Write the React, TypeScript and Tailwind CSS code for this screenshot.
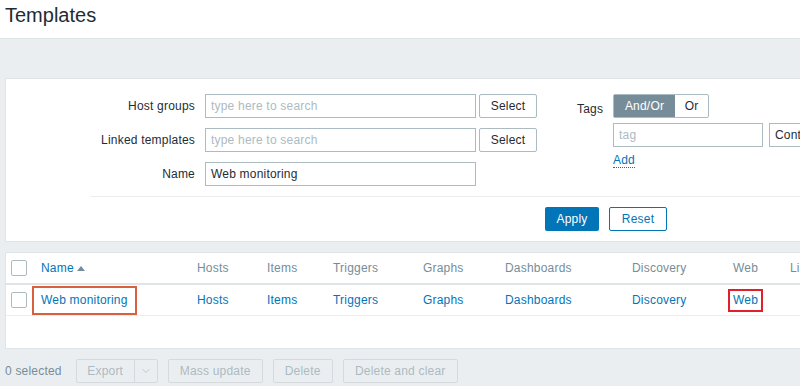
import { ChevronDown } from "lucide-react";

const COLS = [
  { label: "Hosts", w: "w-[70px]" },
  { label: "Items", w: "w-[66px]" },
  { label: "Triggers", w: "w-[90px]" },
  { label: "Graphs", w: "w-[82px]" },
  { label: "Dashboards", w: "w-[127px]" },
  { label: "Discovery", w: "w-[101px]" },
];

export default function App() {
  return (
    <div className="h-[386px] w-[800px] overflow-hidden bg-[#ebeef0] font-['Liberation_Sans',Arial,sans-serif] text-[12px] tracking-[0.2px] text-[#1f2c33]">
      <header className="h-[39px] border-b border-[#dfe4e7] bg-white px-[5px] pt-[3px]">
        <h1 className="text-[20px] leading-[24px] tracking-normal">Templates</h1>
      </header>

      <div className="h-[39px]" />

      <FilterPanel />

      <div className="h-[10px]" />

      <TemplateTable />

      <div className="flex items-center gap-[10px] px-[5px] pt-[10px]">
        <span className="mr-[4px] text-[#768d99]">0 selected</span>
        <div className="flex h-[24px] rounded-[2px] border border-[#d4dadd] text-[#acbbc2]">
          <span className="flex w-[58px] items-center justify-center border-r border-[#d4dadd]">Export</span>
          <span className="flex w-[22px] items-center justify-center">
            <ChevronDown className="h-[12px] w-[12px]" strokeWidth={1.5} />
          </span>
        </div>
        <DisabledButton className="w-[95px]">Mass update</DisabledButton>
        <DisabledButton className="w-[60px]">Delete</DisabledButton>
        <DisabledButton className="w-[115px]">Delete and clear</DisabledButton>
      </div>
    </div>
  );
}

function DisabledButton({ children, className }: { children: React.ReactNode; className: string }) {
  return (
    <span className={`flex h-[24px] items-center justify-center rounded-[2px] border border-[#d4dadd] text-[#acbbc2] ${className}`}>
      {children}
    </span>
  );
}

function FilterPanel() {
  return (
    <section className="ml-[5px] w-[1000px] border border-[#dfe4e7] bg-white pt-[15px] pb-[10px]">
      <div className="flex">
        <div className="flex w-[571px] flex-col gap-[10px]">
          <FormRow label="Host groups">
            <TextInput placeholder="type here to search" />
            <SelectButton />
          </FormRow>
          <FormRow label="Linked templates">
            <TextInput placeholder="type here to search" />
            <SelectButton />
          </FormRow>
          <FormRow label="Name">
            <TextInput value="Web monitoring" />
          </FormRow>
        </div>

        <div className="flex gap-[10px]">
          <span className="mt-[6px] w-[26px]">Tags</span>
          <div className="flex flex-col">
            <div className="flex h-[24px] w-[96px] rounded-[2px] border border-[#acbbc2]">
              <span className="flex w-[61px] items-center justify-center bg-[#768d99] text-white">And/Or</span>
              <span className="flex flex-1 items-center justify-center">Or</span>
            </div>
            <div className="mt-[5px] flex gap-[6px]">
              <span className="flex h-[24px] w-[150px] items-center border border-[#acbbc2] px-[5px] text-[#acbbc2]">
                tag
              </span>
              <span className="flex h-[24px] w-[120px] items-center border border-[#acbbc2] px-[5px]">Contains</span>
            </div>
            <span className="mt-[6px] w-fit border-b border-dotted border-[#0275b8] leading-[14px] text-[#0275b8]">
              Add
            </span>
          </div>
        </div>
      </div>

      <div className="mt-[10px] ml-[84px] border-t border-[#ebeef0] pt-[10px]">
        <div className="ml-[455px] flex gap-[10px]">
          <span className="flex h-[24px] w-[54px] items-center justify-center rounded-[2px] bg-[#0275b8] text-white">
            Apply
          </span>
          <span className="flex h-[24px] w-[58px] items-center justify-center rounded-[2px] border border-[#0275b8] text-[#0275b8]">
            Reset
          </span>
        </div>
      </div>
    </section>
  );
}

function FormRow({ label, children }: { label: string; children: React.ReactNode }) {
  return (
    <div className="flex items-center">
      <span className="w-[199px] pr-[10px] text-right">{label}</span>
      <div className="flex gap-[3px]">{children}</div>
    </div>
  );
}

function TextInput({ placeholder, value }: { placeholder?: string; value?: string }) {
  return (
    <span
      className={`flex h-[24px] w-[271px] items-center border border-[#acbbc2] px-[5px] ${
        value ? "text-[#1f2c33]" : "text-[#acbbc2]"
      }`}
    >
      {value ?? placeholder}
    </span>
  );
}

function SelectButton() {
  return (
    <span className="flex h-[24px] w-[58px] items-center justify-center rounded-[2px] border border-[#acbbc2]">
      Select
    </span>
  );
}

function Checkbox() {
  return <span className="block h-[16px] w-[16px] rounded-[2px] border border-[#acbbc2] bg-white" />;
}

function TemplateTable() {
  return (
    <section className="ml-[5px] h-[97px] w-[1000px] border border-[#dfe4e7] bg-white">
      <div className="flex h-[32px] items-center border-b-2 border-[#dfe4e7] text-[#768d99]">
        <span className="w-[35px] pl-[5px]">
          <Checkbox />
        </span>
        <span className="flex w-[156px] items-center gap-[3px] text-[#0275b8]">
          Name
          <svg viewBox="0 0 8 6" className="h-[6px] w-[8px]" aria-hidden>
            <path d="M0 6L4 1L8 6Z" fill="#768d99" />
          </svg>
        </span>
        {COLS.map((c) => (
          <span key={c.label} className={c.w}>
            {c.label}
          </span>
        ))}
        <span className="w-[57px]">Web</span>
        <span>Linked templates</span>
      </div>

      <div className="flex h-[31px] items-center border-b border-[#ebeef0] text-[#0275b8]">
        <span className="w-[35px] pl-[5px]">
          <Checkbox />
        </span>
        <span className="-ml-[9px] w-[165px]">
          <span className="inline-block border-2 border-[#d9603f] px-[7px] py-[5px] leading-[15px]">Web monitoring</span>
        </span>
        {COLS.map((c) => (
          <span key={c.label} className={c.w}>
            {c.label}
          </span>
        ))}
        <span className="-ml-[5px] w-[62px]">
          <span className="inline-block border-2 border-[#e0202c] px-[3px] py-[2px] leading-[15px]">Web</span>
        </span>
      </div>
    </section>
  );
}
